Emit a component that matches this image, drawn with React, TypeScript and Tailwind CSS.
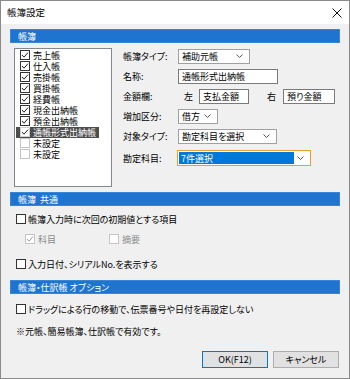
import { ReactNode } from 'react'

const font = "font-['Noto_Sans_CJK_JP','Noto_Sans',sans-serif] [font-feature-settings:'palt']"

function Check({ checked, disabled, dark }: { checked?: boolean; disabled?: boolean; dark?: boolean }) {
  const border = disabled ? 'border-[#c4c4c4]' : dark ? 'border-[#d0d0d0]' : 'border-[#333]'
  return (
    <div className={`w-[10px] h-[10px] shrink-0 border ${border} bg-white flex items-center justify-center`}>
      {checked && (
        <svg width="8" height="8" viewBox="0 0 8 8">
          <path d="M1 4 L3 6.2 L7 1.6" fill="none" stroke={disabled ? '#9a9a9a' : '#222'} strokeWidth="1" />
        </svg>
      )}
    </div>
  )
}

function Chevron() {
  return (
    <svg width="7" height="4" viewBox="0 0 7 4" className="shrink-0">
      <path d="M0.5 0.5 L3.5 3.5 L6.5 0.5" fill="none" stroke="#555" strokeWidth="1" />
    </svg>
  )
}

function Bar({ children }: { children: ReactNode }) {
  return (
    <div className="h-[14px] w-[330px] bg-[#1f74cf] border border-[#3a86d6] flex items-center pl-[7px] text-white text-[9px] leading-none">
      <span className="block">{children}</span>
    </div>
  )
}

function Select({ w, text }: { w: string; text: string }) {
  return (
    <div className={`${w} h-[15px] bg-white border border-[#a0a0a0] flex items-center justify-between pl-[3px] pr-[6px] text-[9px] leading-none`}>
      <span className="block">{text}</span>
      <Chevron />
    </div>
  )
}

function Input({ w, text }: { w: string; text: string }) {
  return (
    <div className={`${w} h-[15px] bg-white border border-[#7a7a7a] flex items-center pl-[3px] text-[9px] leading-none`}>
      <span className="block">{text}</span>
    </div>
  )
}

function Row({ label, children, cls = '' }: { label: string; children: ReactNode; cls?: string }) {
  return (
    <div className={`h-[20px] flex items-center ${cls}`}>
      <div className="w-[55px] text-[9px] leading-none">{label}</div>
      {children}
    </div>
  )
}

const books = [
  { name: '売上帳', on: true },
  { name: '仕入帳', on: true },
  { name: '売掛帳', on: true },
  { name: '買掛帳', on: true },
  { name: '経費帳', on: true },
  { name: '現金出納帳', on: true },
  { name: '預金出納帳', on: true },
  { name: '通帳形式出納帳', on: true, sel: true },
  { name: '未設定', on: false, off: true },
  { name: '未設定', on: false, off: true },
]

export default function App() {
  return (
    <div className={`w-[350px] h-[379px] bg-[#f0f0f0] border border-[#8a8a8a] flex flex-col text-black ${font}`}>
      <div className="h-[23px] bg-white flex items-center justify-between pl-[6px] pr-[7px] shrink-0">
        <span className="block text-[9.5px] leading-none">帳簿設定</span>
        <svg width="10" height="10" viewBox="0 0 10 10">
          <path d="M0.5 0.5 L9.5 9.5 M9.5 0.5 L0.5 9.5" stroke="#111" strokeWidth="1" />
        </svg>
      </div>

      <div className="px-[9px] flex flex-col">
        <div className="mt-[5px]">
          <Bar>帳簿</Bar>
        </div>

        <div className="flex">
          <div className="ml-[4px] mt-[5px] w-[98px] h-[139px] bg-white border border-[#828790] pt-[0.5px] pl-[1px]">
            {books.map((b, i) => (
              <div
                key={i}
                className={`h-[11px] flex items-center w-fit pl-[4px] pr-[3px] ${b.sel ? 'bg-[#4d4d4d] text-white' : ''}`}
              >
                <Check checked={b.on} disabled={b.off} dark={b.sel} />
                <span className="block ml-[3px] text-[9px] leading-none">{b.name}</span>
              </div>
            ))}
          </div>

          <div className="ml-[11px] pt-[3px] flex flex-col">
            <Row label="帳簿タイプ:">
              <Select w="w-[72px]" text="補助元帳" />
            </Row>
            <Row label="名称:">
              <Input w="w-[100px]" text="通帳形式出納帳" />
            </Row>
            <Row label="金額欄:">
              <span className="block ml-[6px] text-[9px] leading-none">左</span>
              <div className="ml-[6px]">
                <Input w="w-[50px]" text="支払金額" />
              </div>
              <span className="block ml-[18px] text-[9px] leading-none">右</span>
              <div className="ml-[7px]">
                <Input w="w-[52px]" text="預り金額" />
              </div>
            </Row>
            <Row label="増加区分:">
              <Select w="w-[40px]" text="借方" />
            </Row>
            <Row label="対象タイプ:">
              <Select w="w-[99px]" text="勘定科目を選択" />
            </Row>
            <Row label="勘定科目:" cls="mt-[2px]">
              <div className="ml-[-1px] w-[134px] h-[16px] bg-white border border-[#e8a02a] flex items-center justify-between pl-[1px] pr-[6px]">
                <div className="w-[115px] h-[12px] bg-[#0078d7] text-white flex items-center pl-[2px] text-[9px] leading-none">
                  <span className="block">7件選択</span>
                </div>
                <Chevron />
              </div>
            </Row>
          </div>
        </div>

        <div className="mt-[5px]">
          <Bar>帳簿&nbsp;&nbsp;共通</Bar>
        </div>

        <div className="mt-[5px] h-[16px] flex items-center pl-[6px]">
          <Check />
          <span className="block ml-[2px] text-[9px] leading-none">帳簿入力時に次回の初期値とする項目</span>
        </div>
        <div className="mt-[4px] h-[16px] flex items-center pl-[15px] text-[#8a8a8a]">
          <Check checked disabled />
          <span className="block ml-[3px] text-[9px] leading-none">科目</span>
          <div className="ml-[53px] flex items-center">
            <Check disabled />
            <span className="block ml-[3px] text-[9px] leading-none">摘要</span>
          </div>
        </div>
        <div className="mt-[9px] h-[16px] flex items-center pl-[6px]">
          <Check />
          <span className="block ml-[2px] text-[9px] leading-none">入力日付、シリアルNo.を表示する</span>
        </div>

        <div className="mt-[8px]">
          <Bar>帳簿・仕訳帳 オプション</Bar>
        </div>

        <div className="mt-[7px] h-[16px] flex items-center pl-[6px]">
          <Check />
          <span className="block ml-[2px] text-[9px] leading-none">ドラッグによる行の移動で、伝票番号や日付を再設定しない</span>
        </div>
        <div className="mt-[6px] h-[16px] flex items-center pl-[6px] text-[9px] leading-none">
          <span className="block">※元帳、簡易帳簿、仕訳帳で有効です。</span>
        </div>

        <div className="mt-[12px] flex justify-end gap-[5px] pr-[1px]">
          <div className="w-[66px] h-[17px] bg-[#e1e1e1] border border-[#0078d7] flex items-center justify-center text-[9px] leading-none">
            <span className="block">OK(F12)</span>
          </div>
          <div className="w-[66px] h-[17px] bg-[#e1e1e1] border border-[#adadad] flex items-center justify-center text-[9px] leading-none">
            <span className="block">キャンセル</span>
          </div>
        </div>
      </div>
    </div>
  )
}
